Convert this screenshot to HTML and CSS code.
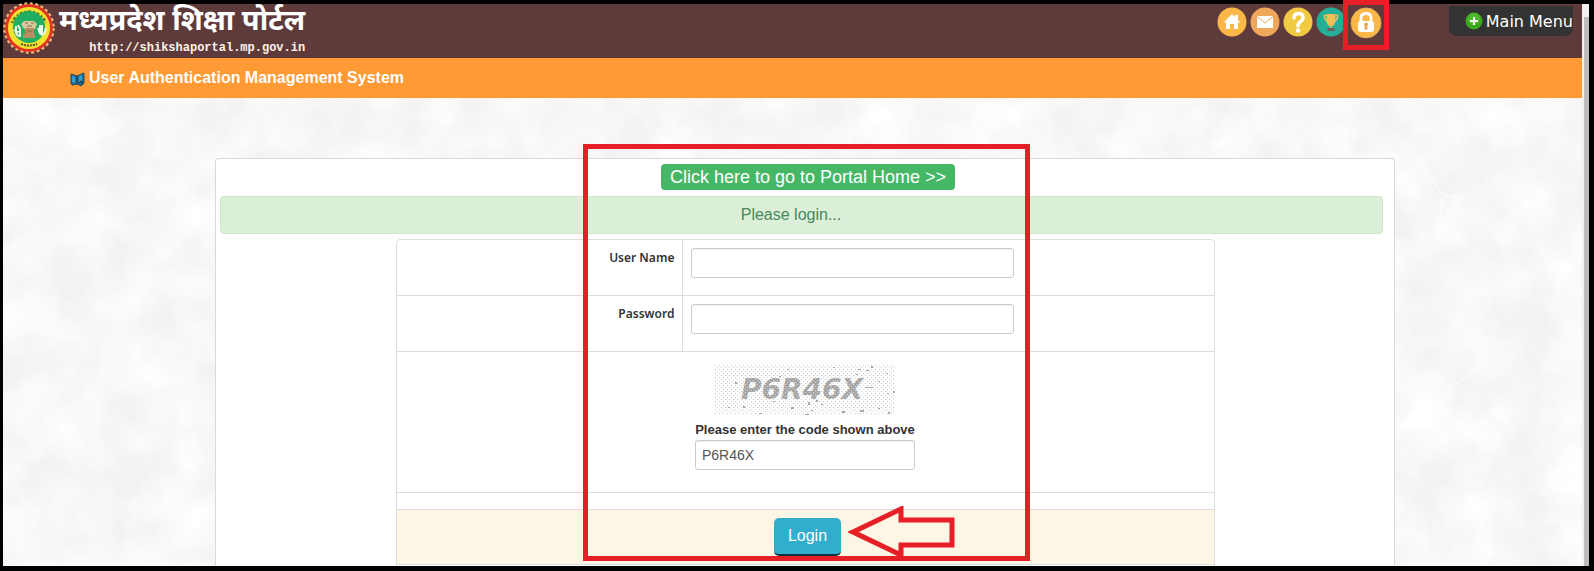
FILE: index.html
```html
<!DOCTYPE html>
<html lang="en">
<head>
<meta charset="utf-8">
<title>User Authentication Management System</title>
<link rel="stylesheet" href="styles.css">
</head>
<body>
<div class="shell">
  <div class="page">
    <header class="masthead">
      <a class="brand" href="#">
        <svg class="emblem" viewBox="0 0 52 52" aria-hidden="true">
          <circle cx="26" cy="26" r="24" fill="#e8452c"/>
          <circle cx="26" cy="26" r="24.500" fill="none" stroke="#f3b878" stroke-width="2.500" stroke-dasharray="3 2.500"/>
          <circle cx="26" cy="26" r="22.500" fill="none" stroke="#e33322" stroke-width="2.500"/>
          <circle cx="26" cy="26" r="21" fill="#f1e32d"/>
          <path d="M9 21a18.500 18.500 0 0 1 34 0" fill="none" stroke="#4c5a1c" stroke-width="3" stroke-dasharray="2 1.500 3 2" opacity=".8"/>
          <circle cx="26" cy="25" r="16" fill="#1fae62"/>
          <path d="M21 19h10l3 3-2 5H21l-3-5z" fill="#d8c9a0"/>
          <path d="M22 26h9v6h-9zM20 32h12v4H20z" fill="#b98d62"/>
          <path d="M22 21h3M28 21h3M24 24h5M24 29h5" stroke="#846c4b"/>
          <path d="M13 24v7q1 3 4 3v-7l-2-4M11 28l5 2M37 23v7q1 4 4 2l2-6M39 23v9M35 26l2 6" fill="none" stroke="#eef7e8" stroke-width="2"/>
          <path d="M16 38q10 7 20 0l3 3q-13 8-26 0z" fill="#f1e32d"/>
          <path d="M18 42q8 3 16 0" fill="none" stroke="#5d5420" stroke-width="2" stroke-dasharray="2 1"/>
        </svg>
        <span class="brand-text">
          <span class="brand-name" lang="hi">मध्यप्रदेश शिक्षा पोर्टल</span>
          <span class="brand-url">http://shikshaportal.mp.gov.in</span>
        </span>
      </a>
      <nav class="quick" aria-label="Quick links">
        <a href="#" aria-label="Home"><svg viewBox="0 0 30 30"><circle cx="15" cy="15" r="14.500" fill="#fbb748"/><path d="M15 7l3 3V8h3v5l2.500 2.500h-2.500V22h-4v-5h-4v5H9v-6.500H6.500z" fill="#fff"/></svg></a>
        <a href="#" aria-label="Mail"><svg viewBox="0 0 30 30"><circle cx="15" cy="15" r="14.500" fill="#efa75c"/><path d="M7 9h16v12H7z" fill="#fff"/><path d="M7 9.500l8 6.500 8-6.500" fill="none" stroke="#efa75c"/></svg></a>
        <a href="#" aria-label="Help"><svg viewBox="0 0 30 30"><circle cx="15" cy="15" r="14.500" fill="#efca42"/><path d="M11 11q0-4.500 4.500-4.500t4.500 4q0 2.500-2.500 4t-2.500 4.500" fill="none" stroke="#fff" stroke-width="3.500" stroke-linecap="round"/><circle cx="15" cy="23.500" r="2.300" fill="#fff"/></svg></a>
        <a href="#" aria-label="Awards"><svg viewBox="0 0 30 30"><circle cx="15" cy="15" r="14.500" fill="#25ae97"/><path d="M10.500 7h9v5q0 6-3 7h-3q-3-1-3-7z" fill="#efc056"/><path d="M10.500 8.500H8.300q0 5 4 6M19.500 8.500h2.200q0 5-4 6M15 17v5" fill="none" stroke="#efc056" stroke-width="1.500"/><path d="M11.500 21h7v3h-7z" fill="#6f5f56"/></svg></a>
        <a class="lock" href="#" aria-label="Login"><svg viewBox="0 0 32 32"><circle cx="16" cy="16" r="15" fill="#fbb748" stroke="#dca85d"/><path d="M11 15v-4q0-4.500 5-4.500t5 4.500v4" fill="none" stroke="#fff" stroke-width="2.800"/><rect x="8" y="14" width="16" height="11" rx="3" fill="#fff"/><path d="M16 15.500a2 2 0 0 1 1 3.700l.7 3.300h-3.400l.7-3.300a2 2 0 0 1 1-3.700z" fill="#efa03e"/></svg></a>
      </nav>
      <button class="menu" type="button">
        <svg viewBox="0 0 18 18" aria-hidden="true"><circle cx="9" cy="9" r="8.500" fill="#39a91c"/><circle cx="9" cy="7" r="6" fill="#5cc434" opacity=".6"/><path d="M9 5v8M5 9h8" stroke="#fff" stroke-width="2"/></svg>
        Main Menu
      </button>
    </header>
    <div class="titlebar">
      <svg viewBox="0 0 15 15" aria-hidden="true"><path d="M1 2l6 2 7-3v10l-3 3-4-2-5 1-1-2z" fill="#1f6f9c" stroke="#294650"/><path d="M2 4l3 1v6l-3-1zM9 4l3-1v5l-3 2z" fill="#2fa0cf"/><path d="M7 4v8M9 11l3-2v4" stroke="#163440" fill="none"/></svg>
      <h1>User Authentication Management System</h1>
    </div>
    <main class="content">
      <svg class="texture" aria-hidden="true">
        <filter id="grain" x="0" y="0" width="100%" height="100%">
          <feTurbulence type="fractalNoise" baseFrequency=".02" numOctaves="7" seed="8"/>
          <feColorMatrix values="0 0 0 0 1  0 0 0 0 1  0 0 0 0 1  1.700 0 0 0 -.4"/>
        </filter>
        <rect width="100%" height="100%" filter="url(#grain)"/>
        <path d="M1410 52l30 46 20 1M1440 99l-7 46M1385 288l48 12 42-30M1425 275l-10 42M1410 430l27 36" fill="none" stroke="#fff" stroke-width="2" opacity=".5"/>
      </svg>
      <section class="card">
        <div class="home-row"><a class="home-link" href="#">Click here to go to Portal Home &gt;&gt;</a></div>
        <p class="notice">Please login...</p>
        <form class="login">
          <table>
            <tbody>
              <tr class="field"><th scope="row"><label for="user">User Name</label></th><td><input id="user" type="text"></td></tr>
              <tr class="field"><th scope="row"><label for="pass">Password</label></th><td><input id="pass" type="password"></td></tr>
              <tr>
                <td class="code" colspan="2">
                  <div class="code-box">
                    <svg class="captcha" viewBox="0 0 180 50" role="img" aria-label="Security code">
                      <defs><pattern id="dots" width="4" height="4" patternUnits="userSpaceOnUse"><path d="M0 0h1v1H0zM2 2h1v1H2z" fill="#d0d0d0"/></pattern>
                      <pattern id="mesh" width="4" height="4" patternUnits="userSpaceOnUse"><path d="M0 0h4v4H0z" fill="#a6a6a6"/><path d="M0 1h1v1H0zM2 3h1v1H2z" fill="#d6d6d6"/></pattern></defs>
                      <rect width="180" height="50" fill="#fdfdfd"/>
                      <rect width="180" height="50" fill="url(#dots)"/>
                      <text x="26" y="34" fill="url(#mesh)">P6R46X</text>
                      <path d="M20 17h2v2h-2zM72 4h2v1h-2zM64 11h2v1h-2zM118 2h2v1h-2zM143 4h3v1h-3zM151 5h3v1h-3zM156 1h2v2h-2zM141 9h2v1h-2zM163 16h2v1h-2zM171 8h2v1h-2zM178 26h2v2h-2zM172 28h2v1h-2zM13 42h2v1h-2zM28 41h2v2h-2zM76 42h3v2h-3zM93 37h2v3h-2zM101 35h2v2h-2zM106 39h2v1h-2zM96 45h2v1h-2zM127 46h3v2h-3zM145 45h4v2h-4zM163 43h2v1h-2zM173 47h2v2h-2zM44 48h3v1h-3zM90 49h4v1h-4zM58 36h2v1h-2zM151 22h7v1h-7z" fill="#a8a8a8"/>
                    </svg>
                    <label for="code">Please enter the code shown above</label>
                    <input id="code" type="text" value="P6R46X">
                  </div>
                </td>
              </tr>
              <tr class="gap"><td colspan="2"></td></tr>
              <tr class="actions"><td colspan="2"><button type="submit">Login</button></td></tr>
              <tr class="gap"><td colspan="2"></td></tr>
            </tbody>
          </table>
        </form>
        <svg class="arrow" viewBox="0 0 108 52" aria-hidden="true"><path d="M5 26L53 3v11h51v25H53v10z" fill="none" stroke="#e61e25" stroke-width="5"/></svg>
        <div class="outline"></div>
      </section>
    </main>
  </div>
  <div class="scrollbar" aria-hidden="true"><div class="thumb"></div></div>
</div>
</body>
</html>
```
FILE: styles.css
```css
* { box-sizing: border-box; }

body {
  margin: 0;
  background: #000;
  color: #333;
  font-family: "Liberation Sans", Arial, sans-serif;
}

.shell {
  display: flex;
  height: 100vh;
  padding: 4px 5px 5px 3px;
  overflow: hidden;
}

.page {
  display: flex;
  flex: 1;
  flex-direction: column;
}

.masthead {
  display: flex;
  flex: none;
  align-items: flex-start;
  height: 54px;
  padding-right: 9px;
  background: #5e3b3a;
}

.brand {
  display: flex;
  gap: 4px;
  margin-right: auto;
  color: #fff;
  text-decoration: none;
}

.emblem {
  width: 52px;
  height: 52px;
  margin-top: -2px;
}

.brand-text {
  display: flex;
  flex-direction: column;
  align-items: flex-end;
}

.brand-name {
  font-family: "Noto Sans Devanagari", "Noto Sans", "Lohit Devanagari", sans-serif;
  font-size: 29px;
  font-weight: 700;
  line-height: 38px;
  white-space: nowrap;
}

.brand-url {
  font: 700 12px/12px "Liberation Mono", "Courier New", monospace;
  color: #fff3e6;
}

.quick {
  display: flex;
  gap: 3px;
  padding-top: 3px;
  margin-right: 67px;
}

.quick a { height: 30px; }

.quick svg {
  display: block;
  width: 30px;
  height: 30px;
}

.quick .lock {
  position: relative;
  margin-left: 1px;
}

.quick .lock svg {
  width: 32px;
  height: 32px;
}

.lock::after {
  position: absolute;
  inset: -7px -7px -13px;
  border: 5px solid #e61e25;
  content: "";
}

.menu {
  display: flex;
  align-items: center;
  gap: 3px;
  height: 30px;
  margin-top: 2px;
  padding: 0 0 0 16px;
  border: 0;
  border-radius: 0 0 8px 8px;
  background: #333;
  color: #fff;
  font: 16px "DejaVu Sans", Verdana, sans-serif;
  white-space: nowrap;
}

.menu svg {
  width: 18px;
  height: 18px;
}

.titlebar {
  display: flex;
  flex: none;
  align-items: center;
  gap: 4px;
  height: 40px;
  padding-left: 67px;
  background: #ff9a35;
}

.titlebar svg {
  width: 15px;
  height: 15px;
  margin-top: 3px;
}

.titlebar h1 {
  margin: 0;
  color: #fff;
  font-size: 16px;
  line-height: 20px;
}

.content {
  position: relative;
  flex: 1;
  min-height: 0;
  padding: 60px 0 0 25px;
  overflow: hidden;
  background: #f2f2f2;
}

.texture {
  position: absolute;
  inset: 0;
  width: 100%;
  height: 100%;
}

.card {
  position: relative;
  max-width: 1180px;
  height: 100%;
  margin: 0 auto;
  padding: 5px 4px 0;
  border: 1px solid #d9d9d9;
  border-bottom: 0;
  border-radius: 4px 4px 0 0;
  background: #fff;
}

.home-row {
  display: flex;
  justify-content: center;
  padding-left: 6px;
}

.home-link {
  padding: 0 9px;
  border-radius: 4px;
  background: #46b865;
  color: #fff;
  font-size: 18px;
  line-height: 26px;
  text-decoration: none;
}

.notice {
  margin: 6px 7px 5px 0;
  padding: 8px 35px 8px 14px;
  border: 1px solid #d0e6c6;
  border-radius: 4px;
  background: #dcefd9;
  color: #46885a;
  font-size: 16px;
  line-height: 20px;
  text-align: center;
}

.login {
  width: 70%;
  margin: 0 auto;
}

.login table {
  width: 100%;
  border: 1px solid #ddd;
  border-radius: 4px 4px 0 0;
  border-spacing: 0;
  table-layout: fixed;
}

.login th,
.login td {
  padding: 8px;
  border-top: 1px solid #ddd;
  vertical-align: top;
}

.login tr:first-child > * { border-top: 0; }

.login th {
  width: 35%;
  font-family: "Noto Sans", "Open Sans", sans-serif;
  font-size: 12px;
  font-weight: 600;
  line-height: 20px;
  text-align: right;
}

.login .field td { border-left: 1px solid #ddd; }

.login input {
  display: block;
  height: 30px;
  padding: 4px 6px;
  border: 1px solid #ccc;
  border-radius: 3px;
  background: #fff;
  box-shadow: inset 0 1px 1px #eee;
  color: #555;
  font: 14px "Liberation Sans", Arial, sans-serif;
}

.field input {
  width: 323px;
  margin-bottom: 9px;
}

.login .code { padding: 13px 8px 22px; }

.code-box {
  display: flex;
  flex-direction: column;
  align-items: center;
}

.captcha {
  width: 180px;
  height: 50px;
}

.captcha text {
  font: italic 700 28px "DejaVu Sans", Verdana, sans-serif;
}

.code-box label {
  padding-top: 5px;
  font-size: 13px;
  font-weight: 700;
  line-height: 20px;
}

.code-box input { width: 220px; }

.login .gap td {
  height: 17px;
  padding: 0;
}

.login .actions td {
  padding-left: 13px;
  background: #fdf6e4;
  text-align: center;
}

.actions button {
  height: 38px;
  padding: 0 14px;
  border: 0;
  border-bottom: 2px solid #10343d;
  border-radius: 5px;
  background: #31aecd;
  color: #fff;
  font: 16px "Liberation Sans", Arial, sans-serif;
  vertical-align: top;
}

.outline {
  position: absolute;
  top: -15px;
  left: 367px;
  width: 447px;
  height: 417px;
  border: 5px solid #e61e25;
  pointer-events: none;
}

.arrow {
  position: absolute;
  top: 347px;
  left: 632px;
  width: 108px;
  height: 52px;
}

.scrollbar {
  width: 7px;
  padding: 13px 0 0 2px;
  background: #f1f1f1;
}

.thumb {
  height: 100%;
  background: #bdbdbd;
}
```
